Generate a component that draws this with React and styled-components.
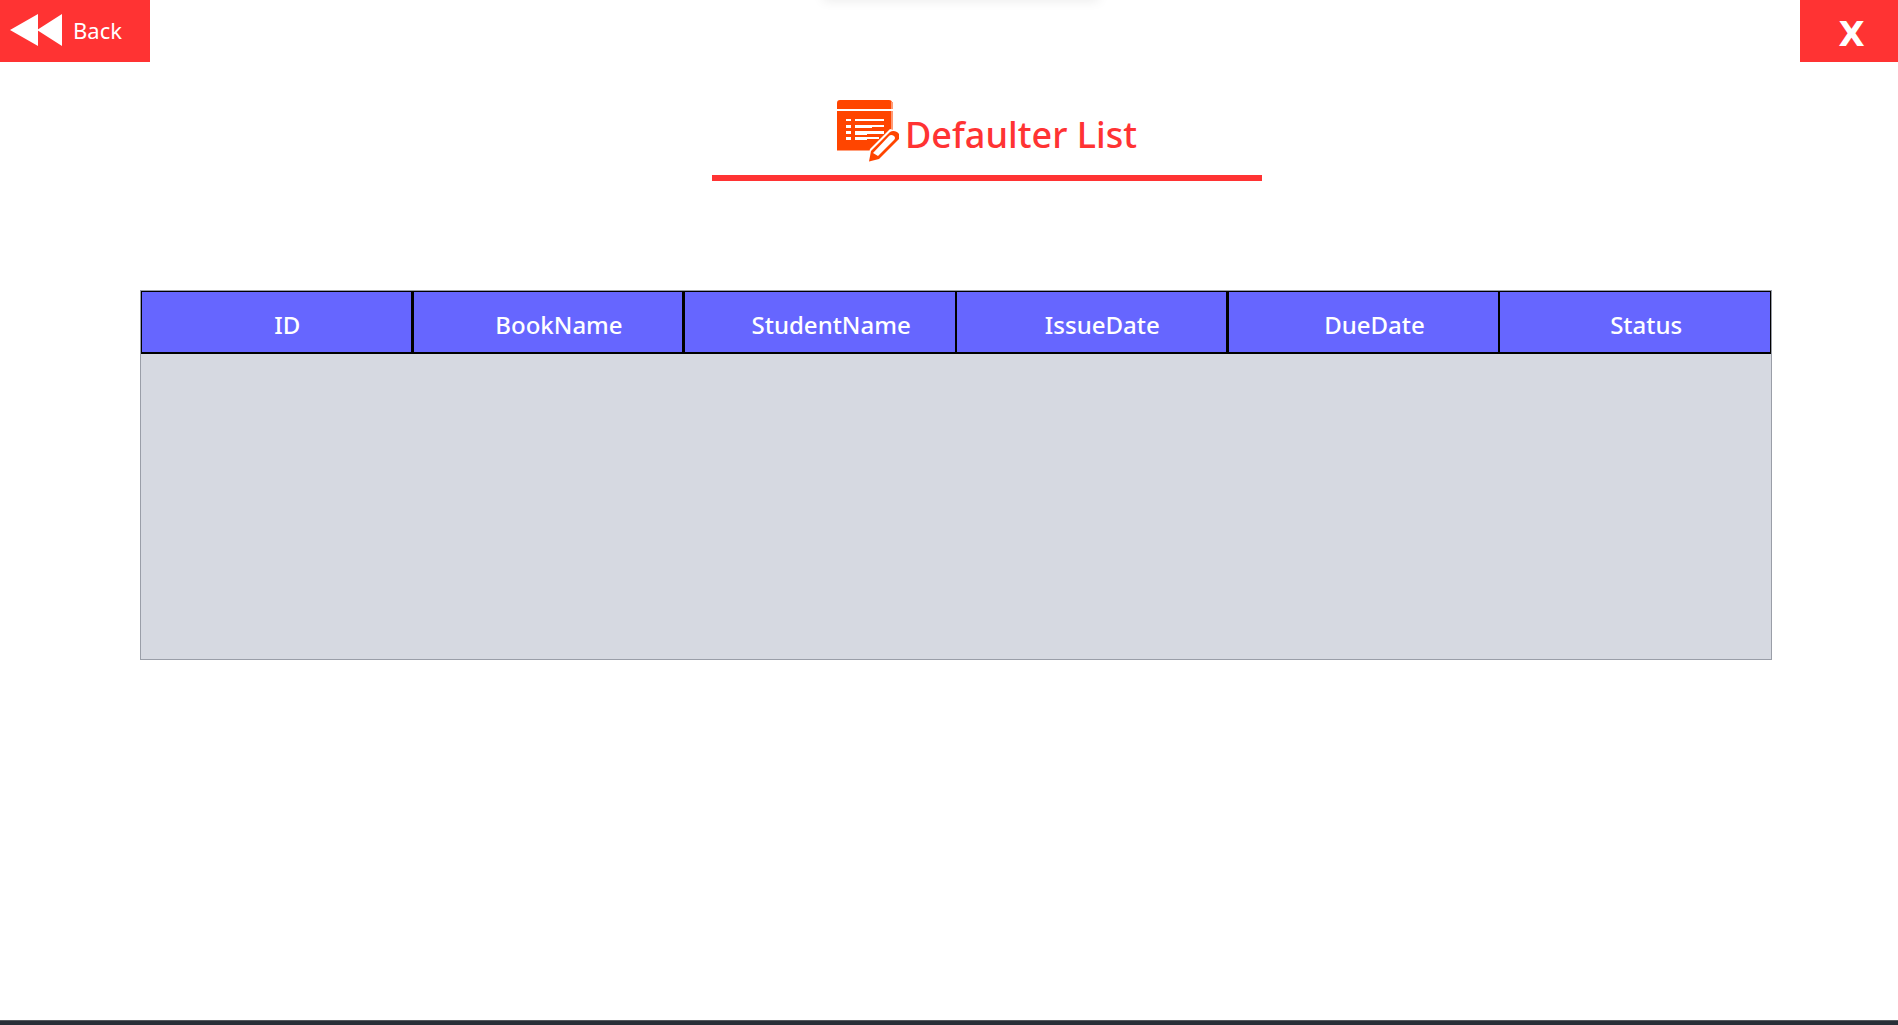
import React from "react";
import styled, { createGlobalStyle } from "styled-components";

const red = "#ff3333";
const uiFont = `"Noto Sans", "Open Sans", sans-serif`;

const GlobalStyle = createGlobalStyle`
  *, *::before, *::after { box-sizing: border-box; }
  body { margin: 0; background: #fff; font-family: ${uiFont}; }
`;

const Page = styled.div`
  position: relative;
  min-height: 100vh;
  display: flex;
  flex-direction: column;
  overflow: hidden;
`;

const TopShade = styled.div`
  position: absolute;
  top: -8px;
  left: 50%;
  width: 276px;
  height: 8px;
  margin-left: -126px;
  box-shadow: 0 0 12px rgba(0, 0, 0, 0.1);
`;

const TopBar = styled.header`
  display: flex;
  justify-content: space-between;
  height: 62px;
`;

const BarButton = styled.button`
  display: flex;
  align-items: center;
  border: 0;
  background: ${red};
  color: #fff;
  cursor: pointer;
`;

const BackButton = styled(BarButton)`
  width: 150px;
  padding: 0 10px 2px;
  gap: 11px;
  font: 400 22px/30px ${uiFont};
`;

const CloseButton = styled(BarButton)`
  width: 98px;
  padding: 5px 0 0 5px;
  justify-content: center;
  font: 700 34px/48px "DejaVu Sans", sans-serif;
`;

const Heading = styled.div`
  display: flex;
  justify-content: center;
  align-items: flex-start;
  align-self: center;
  width: 550px;
  height: 81px;
  margin: 38px 0 0 76px;
  gap: 6px;
  border-bottom: 6px solid ${red};
`;

const Title = styled.h1`
  margin: 0;
  padding-top: 11px;
  color: ${red};
  font: 500 36px/48px ${uiFont};
`;

const TablePanel = styled.main`
  height: 370px;
  margin: 109px 126px 0 140px;
  border: 1px solid #9a9ea8;
  background: #d6d9e1;
`;

const Table = styled.table`
  width: 100%;
  table-layout: fixed;
  border-collapse: separate;
  border-spacing: 0;
`;

const HeadCell = styled.th`
  height: 63px;
  padding: 5px 0 0 22px;
  border: 1px solid #000;
  border-bottom-width: 2px;
  border-right-width: ${({ $heavy }) => ($heavy ? "2px" : "1px")};
  background: #6666ff;
  color: #fff;
  text-align: center;
  font: 500 24px/34px ${uiFont};
`;

const BottomEdge = styled.footer`
  height: 5px;
  margin-top: auto;
  border-top: 1px solid #555a5f;
  background: #282f38;
`;

const RewindIcon = () => (
  <svg width="52" height="32" viewBox="0 0 52 32" fill="#fff" aria-hidden="true">
    <path d="M0 16 28 0V32ZM27 16 52 0V32Z" />
  </svg>
);

const ListIcon = () => (
  <svg width="62" height="62" viewBox="0 0 62 62" aria-hidden="true">
    <path fill="#ff4500" d="M0 9V3Q0 0 3 0H52Q55 0 55 3V9ZM0 11H55V32L36 50.500H0Z" />
    <path fill="#ff9a75" d="M54 2h2v7h-2zM54 11h2v20h-2z" />
    <path
      fill="#fff"
      d="M9 19h5v2H9zM18 19h29v2H18zM9 25h5v3H9zM18 25h29v2H35v1H18zM9 31h5v3H9zM18 31h29v3H30v1H18zM9 37h5v3H9zM18 37h24v2H30v1H18z"
    />
    <path fill="#fff" d="M30 62 33 49 53 29 63 32V42L42 62Z" />
    <path
      fill="#ff4500"
      fillRule="evenodd"
      d="M32 61.500 34 51 53 32Q56 30 60 32Q64 35 62 39L42 59ZM36 53 41 56 57 40Q59 38 57 36Q54 34 52 36Z"
    />
  </svg>
);

const columns = [
  { name: "ID", heavy: true },
  { name: "BookName", heavy: true },
  { name: "StudentName" },
  { name: "IssueDate", heavy: true },
  { name: "DueDate" },
  { name: "Status" },
];

export default function App() {
  return (
    <Page>
      <GlobalStyle />
      <TopShade />
      <TopBar>
        <BackButton type="button">
          <RewindIcon />
          Back
        </BackButton>
        <CloseButton type="button">X</CloseButton>
      </TopBar>
      <Heading>
        <ListIcon />
        <Title>Defaulter List</Title>
      </Heading>
      <TablePanel>
        <Table>
          <thead>
            <tr>
              {columns.map(({ name, heavy }) => (
                <HeadCell key={name} scope="col" $heavy={heavy}>
                  {name}
                </HeadCell>
              ))}
            </tr>
          </thead>
        </Table>
      </TablePanel>
      <BottomEdge />
    </Page>
  );
}
